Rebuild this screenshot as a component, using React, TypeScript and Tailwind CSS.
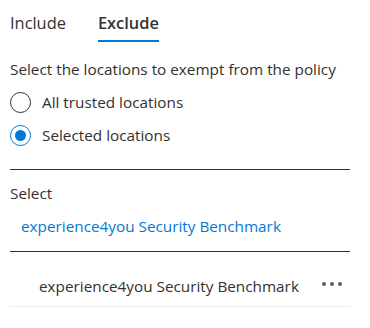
import { useState } from "react"

const Radio = ({ checked, label, onClick }: { checked: boolean; label: string; onClick: () => void }) => (
  <button onClick={onClick} className="flex items-center h-[33px] text-left">
    <span
      className={
        "flex items-center justify-center w-[21px] h-[21px] rounded-full border " +
        (checked ? "border-[#0078d4]" : "border-[#323130]")
      }
    >
      {checked && <span className="w-[11px] h-[11px] rounded-full bg-[#0078d4]" />}
    </span>
    <span className="ml-[11px]">{label}</span>
  </button>
)

const App = () => {
  const [tab, setTab] = useState("exclude")
  const [choice, setChoice] = useState("selected")

  return (
    <main className="w-[370px] h-[328px] bg-white px-[10px] text-[15.3px] text-[#323130] font-['Open_Sans',sans-serif]">
      <nav className="flex gap-[32px] h-[42px] text-[16.4px]">
        <button
          onClick={() => setTab("include")}
          className={"pt-[6px] border-b-2 " + (tab === "include" ? "border-[#0078d4] font-semibold" : "border-transparent")}
        >
          Include
        </button>
        <button
          onClick={() => setTab("exclude")}
          className={"pt-[6px] border-b-2 " + (tab === "exclude" ? "border-[#0078d4] font-semibold" : "border-transparent")}
        >
          Exclude
        </button>
      </nav>

      <p className="mt-[17px] leading-[20px]">Select the locations to exempt from the policy</p>
      <div className="flex flex-col mt-[7px]">
        <Radio checked={choice === "all"} label="All trusted locations" onClick={() => setChoice("all")} />
        <Radio checked={choice === "selected"} label="Selected locations" onClick={() => setChoice("selected")} />
      </div>

      <div className="mt-[17px] border-t border-[#323130] w-[340px]" />
      <p className="mt-[13px] leading-[20px]">Select</p>
      <a className="block mt-[13px] ml-[11px] leading-[20px] text-[#0078d4] cursor-pointer">
        experience4you Security Benchmark
      </a>

      <div className="mt-[15px] border-t border-[#323130] w-[340px]" />
      <div className="flex items-center justify-between w-[340px] h-[55px] pt-[14px] border-b border-[#edebe9]">
        <span className="ml-[29px]">experience4you Security Benchmark</span>
        <span className="flex gap-[4px] mr-[8px] -mt-[5px]">
          <span className="w-[4px] h-[4px] rounded-full bg-[#605e5c]" />
          <span className="w-[4px] h-[4px] rounded-full bg-[#605e5c]" />
          <span className="w-[4px] h-[4px] rounded-full bg-[#605e5c]" />
        </span>
      </div>
    </main>
  )
}

export default App
